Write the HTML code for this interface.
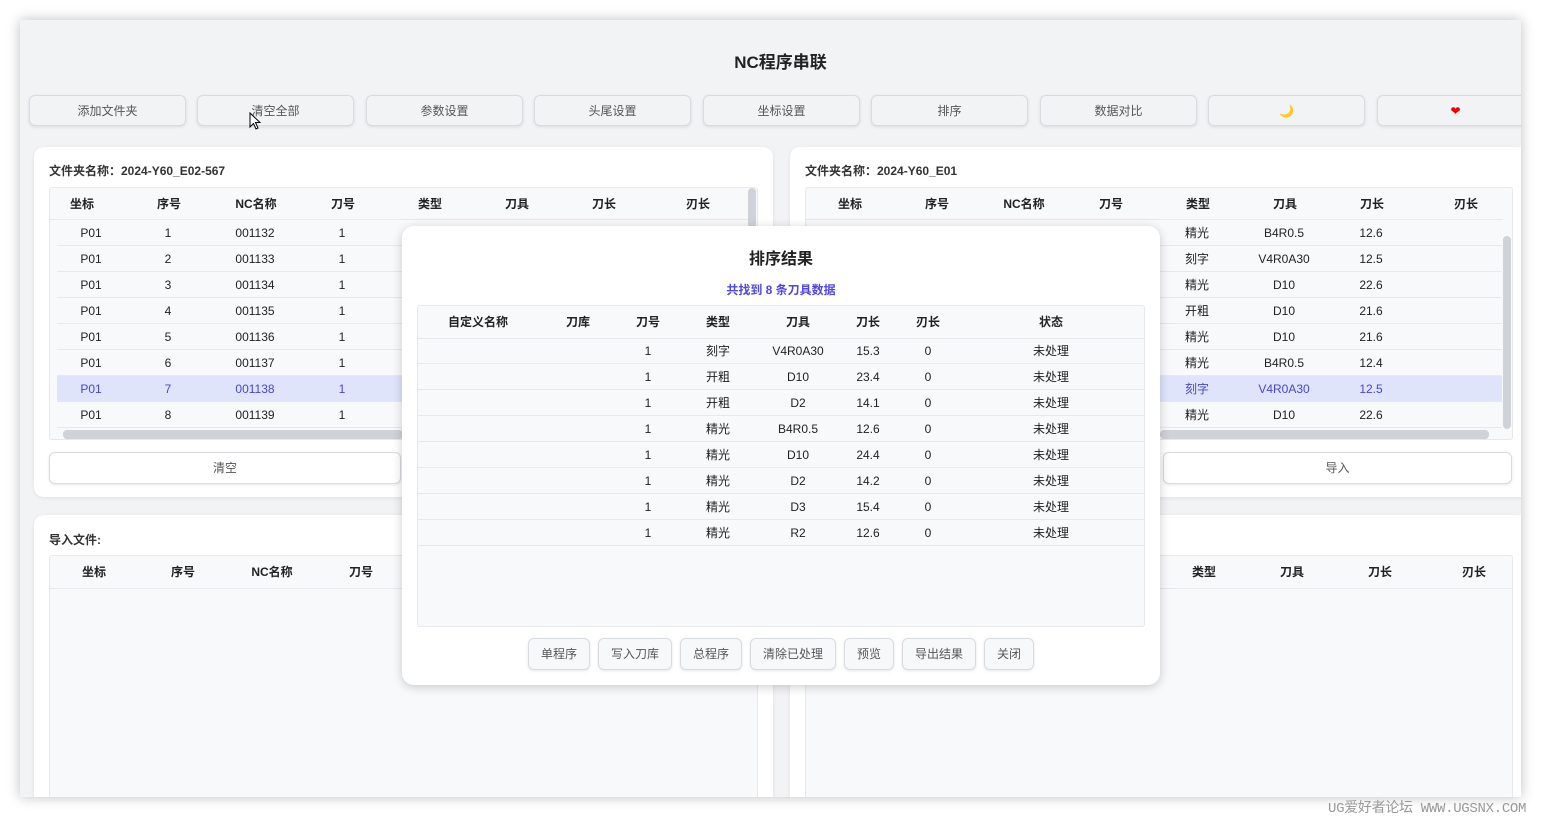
<!DOCTYPE html><html><head><meta charset="utf-8"><style>
*{box-sizing:border-box;margin:0;padding:0}
body{width:1541px;height:817px;background:#fff;font-family:"Liberation Sans","Noto Sans CJK SC",sans-serif;font-size:12px;color:#222;position:relative;overflow:hidden}
.win{position:absolute;left:20px;top:20px;width:1501px;height:777px;background:#f2f3f5;box-shadow:0 0 12px rgba(0,0,0,.25);overflow:hidden}
.clip{position:absolute;left:0;top:0;width:1521px;height:797px;overflow:hidden}
.a{position:absolute}
.title{left:0;width:1561px;top:48px;text-align:center;font-size:17px;font-weight:bold;color:#222}
.tb{top:95px;width:157px;height:31px;border:1px solid #d8dbe0;border-radius:6px;background:#f2f3f5;box-shadow:0 1px 3px rgba(0,0,0,.1);text-align:center;line-height:30px;color:#555;font-size:12px}
.panel{background:#fff;border-radius:10px;box-shadow:0 1px 4px rgba(0,0,0,.08)}
.lbl{font-weight:bold;font-size:12px;color:#333}
.tbl{background:#f8f9fb;border:1px solid #e6e8ec;border-radius:3px;overflow:hidden}
.row{position:absolute;left:0;height:26px;line-height:26px;border-bottom:1px solid #e6e8ec}
.c{position:absolute;text-align:center;transform:translateX(-50%);white-space:nowrap}
.h{font-weight:bold}
.sel{background:#dfe4fb;color:#4a46c8}
.btn{position:absolute;height:32px;border:1px solid #d8dbe0;border-radius:6px;background:#f7f8fa;line-height:30px;text-align:center;color:#555;box-shadow:0 1px 3px rgba(0,0,0,.1)}
</style></head><body>
<div class="win"></div>
<div class="clip">
<div class="a title">NC程序串联</div>
<div class="a tb" style="left:29px">添加文件夹</div>
<div class="a tb" style="left:197px">清空全部</div>
<div class="a tb" style="left:366px">参数设置</div>
<div class="a tb" style="left:534px">头尾设置</div>
<div class="a tb" style="left:703px">坐标设置</div>
<div class="a tb" style="left:871px">排序</div>
<div class="a tb" style="left:1040px">数据对比</div>
<div class="a tb" style="left:1208px;color:#e0a400">🌙</div>
<div class="a tb" style="left:1377px;color:#e00">❤</div>

<div class="a panel" style="left:34px;top:147px;width:739px;height:350px"></div>
<div class="a lbl" style="left:49px;top:162px">文件夹名称：2024-Y60_E02-567</div>
<div class="a tbl" style="left:49px;top:187px;width:709px;height:253px">
<div class="row h" style="top:0;width:700px;height:32px;line-height:32px">
<span class="c" style="left:32px">坐标</span><span class="c" style="left:119px">序号</span><span class="c" style="left:206px">NC名称</span><span class="c" style="left:293px">刀号</span><span class="c" style="left:380px">类型</span><span class="c" style="left:467px">刀具</span><span class="c" style="left:554px">刀长</span><span class="c" style="left:648px">刃长</span></div>
</div>
<div class="a" style="left:748px;top:188px;width:8px;height:40px;background:#cfd2d8;border-radius:4px"></div>
<div class="a" style="left:63px;top:430px;width:340px;height:9px;background:#cfd2d8;border-radius:4px"></div>
<div id="lrows"></div>
<div class="btn" style="left:49px;top:452px;width:352px;background:#fff">清空</div>

<div class="a panel" style="left:790px;top:147px;width:740px;height:350px"></div>
<div class="a lbl" style="left:805px;top:162px">文件夹名称：2024-Y60_E01</div>
<div class="a tbl" style="left:805px;top:187px;width:708px;height:253px">
<div class="row h" style="top:0;width:697px;height:32px;line-height:32px">
<span class="c" style="left:44px">坐标</span><span class="c" style="left:131px">序号</span><span class="c" style="left:218px">NC名称</span><span class="c" style="left:305px">刀号</span><span class="c" style="left:392px">类型</span><span class="c" style="left:479px">刀具</span><span class="c" style="left:566px">刀长</span><span class="c" style="left:660px">刃长</span></div>
</div>
<div class="a" style="left:1503px;top:236px;width:8px;height:193px;background:#cfd2d8;border-radius:4px"></div>
<div class="a" style="left:1160px;top:430px;width:329px;height:9px;background:#cfd2d8;border-radius:4px"></div>
<div class="btn" style="left:1163px;top:452px;width:349px;background:#fff">导入</div>

<div class="a panel" style="left:34px;top:515px;width:739px;height:300px"></div>
<div class="a lbl" style="left:49px;top:531px">导入文件:</div>
<div class="a tbl" style="left:49px;top:555px;width:709px;height:260px">
<div class="row h" style="top:0;width:709px;height:33px;line-height:33px">
<span class="c" style="left:44px">坐标</span><span class="c" style="left:133px">序号</span><span class="c" style="left:222px">NC名称</span><span class="c" style="left:311px">刀号</span></div></div>
<div class="a panel" style="left:790px;top:515px;width:740px;height:300px"></div>
<div class="a tbl" style="left:805px;top:555px;width:708px;height:260px">
<div class="row h" style="top:0;width:708px;height:33px;line-height:33px">
<span class="c" style="left:398px">类型</span><span class="c" style="left:486px">刀具</span><span class="c" style="left:574px">刀长</span><span class="c" style="left:668px">刃长</span></div></div>

<div id="rrows"></div>

<div class="a" style="left:402px;top:226px;width:758px;height:459px;background:#fff;border-radius:12px;box-shadow:0 2px 10px rgba(0,0,0,.2)"></div>
<div class="a" style="left:402px;width:758px;top:245px;text-align:center;font-size:16px;font-weight:bold;color:#222">排序结果</div>
<div class="a" style="left:402px;width:758px;top:281px;text-align:center;font-size:12px;font-weight:bold;color:#4f46e5">共找到 8 条刀具数据</div>
<div class="a tbl" style="left:417px;top:305px;width:728px;height:322px">
<div class="row h" style="top:0;width:728px;height:33px;line-height:33px">
<span class="c" style="left:60px">自定义名称</span><span class="c" style="left:160px">刀库</span><span class="c" style="left:230px">刀号</span><span class="c" style="left:300px">类型</span><span class="c" style="left:380px">刀具</span><span class="c" style="left:450px">刀长</span><span class="c" style="left:510px">刃长</span><span class="c" style="left:633px">状态</span></div>
<div id="mrows"></div>
</div>
<div class="btn" style="left:528px;top:638px;width:62px">单程序</div>
<div class="btn" style="left:598px;top:638px;width:74px">写入刀库</div>
<div class="btn" style="left:680px;top:638px;width:62px">总程序</div>
<div class="btn" style="left:750px;top:638px;width:86px">清除已处理</div>
<div class="btn" style="left:844px;top:638px;width:50px">预览</div>
<div class="btn" style="left:902px;top:638px;width:74px">导出结果</div>
<div class="btn" style="left:984px;top:638px;width:50px">关闭</div>
<svg class="a" style="left:249px;top:112px" width="14" height="20"><path d="M1 1 L1 15 L4.5 11.5 L7 17 L9 16 L6.5 10.5 L11 10.5 Z" fill="#fff" stroke="#000"/></svg>
</div>
<div class="a" style="left:1328px;top:797px;font-family:'Liberation Mono','Noto Sans CJK SC',monospace;font-size:14px;color:#999;letter-spacing:-0.3px">UG爱好者论坛 WWW.UGSNX.COM</div>

<script>
var L='',R='',M='';
var rt=[['精光','B4R0.5','12.6'],['刻字','V4R0A30','12.5'],['精光','D10','22.6'],['开粗','D10','21.6'],['精光','D10','21.6'],['精光','B4R0.5','12.4'],['刻字','V4R0A30','12.5'],['精光','D10','22.6']];
for(var i=0;i<8;i++){var y=220+i*26,s=i==6?' sel':'';
L+='<div class="a row'+s+'" style="left:57px;top:'+y+'px;width:690px"><span class="c" style="left:34px">P01</span><span class="c" style="left:111px">'+(i+1)+'</span><span class="c" style="left:198px">00113'+(i+2)+'</span><span class="c" style="left:285px">1</span></div>';
R+='<div class="a row'+s+'" style="left:1160px;top:'+y+'px;width:342px"><span class="c" style="left:37px">'+rt[i][0]+'</span><span class="c" style="left:124px">'+rt[i][1]+'</span><span class="c" style="left:211px">'+rt[i][2]+'</span></div>';}
document.getElementById('lrows').outerHTML=L;
document.getElementById('rrows').outerHTML=R;
var mt=[['刻字','V4R0A30','15.3'],['开粗','D10','23.4'],['开粗','D2','14.1'],['精光','B4R0.5','12.6'],['精光','D10','24.4'],['精光','D2','14.2'],['精光','D3','15.4'],['精光','R2','12.6']];
for(i=0;i<8;i++){M+='<div class="row" style="top:'+(32+i*26)+'px;width:728px"><span class="c" style="left:230px">1</span><span class="c" style="left:300px">'+mt[i][0]+'</span><span class="c" style="left:380px">'+mt[i][1]+'</span><span class="c" style="left:450px">'+mt[i][2]+'</span><span class="c" style="left:510px">0</span><span class="c" style="left:633px">未处理</span></div>';}
document.getElementById('mrows').outerHTML=M;
</script>
</body></html>
